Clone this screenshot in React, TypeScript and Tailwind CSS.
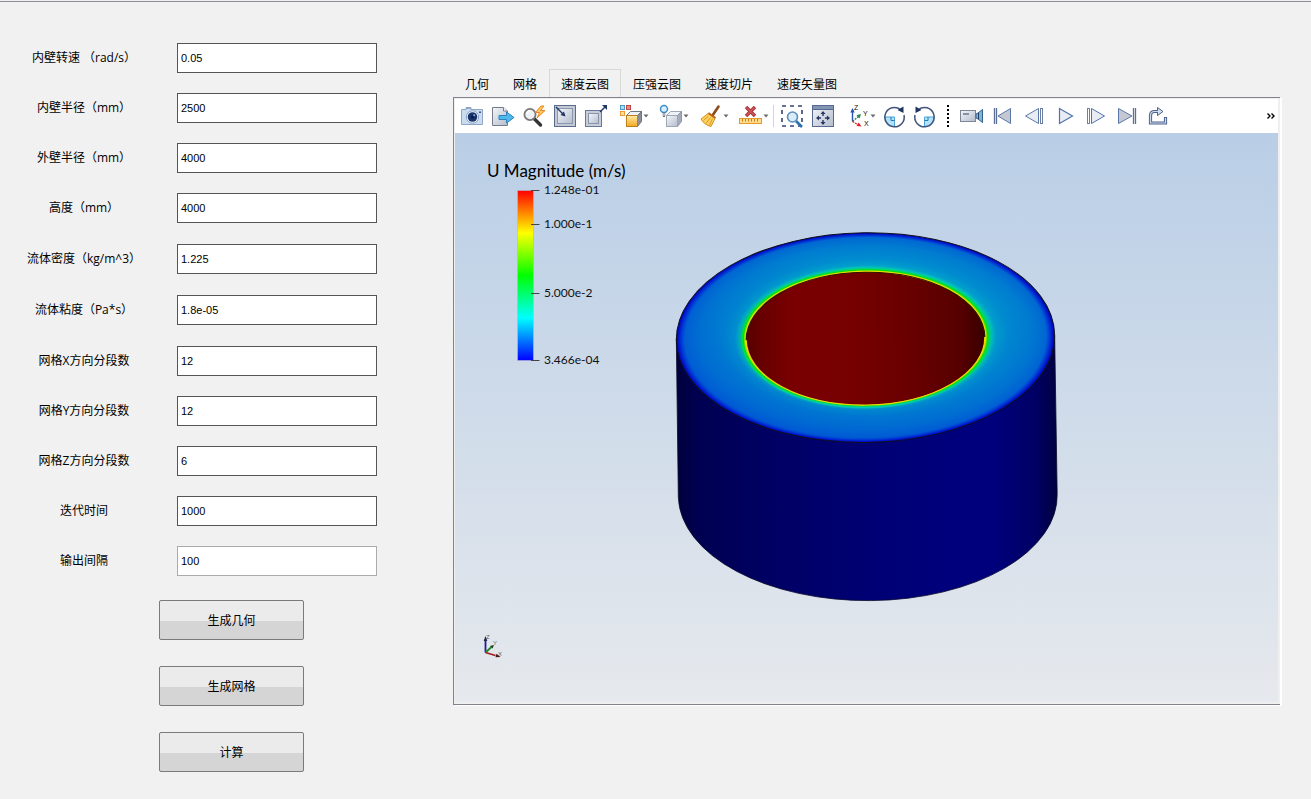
import type { ReactNode } from 'react'

const fieldGroups = [
  [
    { id: 'speed', label: '内壁转速 （rad/s）', value: '0.05' },
    { id: 'inner', label: '内壁半径（mm）', value: '2500' },
    { id: 'outer', label: '外壁半径（mm）', value: '4000' },
    { id: 'height', label: '高度（mm）', value: '4000' },
  ],
  [{ id: 'density', label: '流体密度（kg/m^3）', value: '1.225' }],
  [{ id: 'viscosity', label: '流体粘度（Pa*s）', value: '1.8e-05' }],
  [
    { id: 'meshx', label: '网格X方向分段数', value: '12' },
    { id: 'meshy', label: '网格Y方向分段数', value: '12' },
    { id: 'meshz', label: '网格Z方向分段数', value: '6' },
    { id: 'time', label: '迭代时间', value: '1000' },
    { id: 'interval', label: '输出间隔', value: '100', light: true },
  ],
]

const actions = ['生成几何', '生成网格', '计算']
const tabs = ['几何', '网格', '速度云图', '压强云图', '速度切片', '速度矢量图']

function Icon({ children }: { children: ReactNode }) {
  return (
    <svg viewBox="0 0 24 24" className="h-6 w-6 shrink-0" fill="none" aria-hidden="true">
      {children}
    </svg>
  )
}

function Tool({ label, children }: { label: string; children: ReactNode }) {
  return (
    <button type="button" aria-label={label} className="flex w-[31px] shrink-0 items-center justify-center">
      <Icon>{children}</Icon>
    </button>
  )
}

function DropTool({ label, children }: { label: string; children: ReactNode }) {
  return (
    <button type="button" aria-label={label} className="flex w-10 shrink-0 items-center pl-2">
      <Icon>{children}</Icon>
      <svg viewBox="0 0 6 4" className="h-1 w-1.5" aria-hidden="true">
        <path d="M0.5 0.5h5L3 3.5z" fill="#6b6b6b" />
      </svg>
    </button>
  )
}

function Toolbar() {
  return (
    <div className="flex h-[34px] shrink-0 items-stretch overflow-hidden bg-white px-px">
      <svg className="absolute h-0 w-0" aria-hidden="true">
        <defs>
          <linearGradient id="steel" x1="0" y1="0" x2="1" y2="1">
            <stop offset="0" stopColor="#f4f6fa" />
            <stop offset="1" stopColor="#b4bccc" />
          </linearGradient>
          <linearGradient id="gold" x1="0" y1="0" x2="0" y2="1">
            <stop offset="0" stopColor="#ffe9a8" />
            <stop offset="1" stopColor="#f5a81c" />
          </linearGradient>
        </defs>
      </svg>
      <Tool label="保存截图">
        <path d="M1.5 5.5H6V3.5h5v2h11.5v15h-21z" fill="#c9dcf0" stroke="#8fa6c4" />
        <rect x="6" y="3" width="5" height="2" fill="#8fa6c4" />
        <circle cx="12.5" cy="13" r="6.2" fill="#f3f8fd" stroke="#8aa2c4" />
        <circle cx="12.5" cy="13" r="4.8" fill="#17356e" />
        <circle cx="12.5" cy="13" r="1.8" fill="#0c1f47" />
        <circle cx="14.2" cy="11.2" r="1" fill="#86b4e8" />
        <rect x="19" y="7.5" width="2" height="1.5" fill="#3d5c90" />
      </Tool>
      <Tool label="导出场景">
        <path d="M1.5 3.5h11l4 3.5v14.5h-15z" fill="url(#steel)" stroke="#777c88" />
        <path d="M12.5 3.5V7h4" fill="#fff" stroke="#777c88" />
        <path d="M8 11.5h7.5V8l7.5 5.5-7.5 5.5v-3.5H8z" fill="#4db8ee" stroke="#2c83bb" />
      </Tool>
      <Tool label="自适应缩放">
        <path d="M12.5 15l6 6" stroke="#333" strokeWidth="3.4" strokeLinecap="round" />
        <circle cx="8" cy="10.5" r="5.6" fill="#eef0f3" stroke="#777" strokeWidth="1.8" />
        <path d="M5 10a3.3 3.3 0 013-3" stroke="#fff" strokeWidth="1.4" />
        <path d="M19 2l-5.5 6.5h4L15 14l8-7.5h-4.5L22 2z" fill="#ffc765" stroke="#ec861c" />
      </Tool>
      <Tool label="重置相机">
        <rect x="1.5" y="1.5" width="21" height="21" fill="#c3c9d4" stroke="#5a6b8c" />
        <rect x="4.5" y="4.5" width="15" height="15" fill="url(#steel)" stroke="#8c98ad" />
        <path d="M3 3l8.5 8.5" stroke="#233765" strokeWidth="1.4" />
        <path d="M12.5 12.5l-5-1.5 3.5-3.5z" fill="#233765" />
      </Tool>
      <Tool label="缩放到数据">
        <rect x="1.5" y="6.5" width="16" height="16" fill="#c6ccd8" stroke="#67789a" />
        <rect x="4.5" y="9.5" width="10" height="10" fill="url(#steel)" stroke="#8995aa" />
        <path d="M16 8l5.5-5.5" stroke="#233765" strokeWidth="1.4" />
        <path d="M23 1v5l-5-5z" fill="#233765" />
      </Tool>
      <DropTool label="选择块">
        <rect x="1.5" y="1.5" width="4" height="4" fill="#a8ddf5" stroke="#4d9cc6" />
        <rect x="7.5" y="1.5" width="4" height="4" fill="#e68b8b" stroke="#c04a4a" />
        <rect x="1.5" y="7.5" width="4" height="4" fill="#ffe0a0" stroke="#f09c34" />
        <path d="M7.5 11.5l4-4h11l-4 4z" fill="#eef1f5" stroke="#71757e" />
        <path d="M18.5 11.5l4-4v10l-4 5z" fill="#8a8e98" stroke="#71757e" />
        <rect x="7.5" y="11.5" width="11" height="11" fill="url(#gold)" stroke="#b98120" />
      </DropTool>
      <DropTool label="显示块">
        <path d="M7.5 11.5l4-4h11l-4 4z" fill="#eef1f5" stroke="#a0a7b4" />
        <path d="M18.5 11.5l4-4v10l-4 5z" fill="#a3abba" stroke="#8f97a6" />
        <rect x="7.5" y="11.5" width="11" height="11" fill="url(#steel)" stroke="#a0a7b4" />
        <circle cx="5" cy="5" r="3.5" fill="#d9effc" stroke="#3f8fca" strokeWidth="1.5" />
        <path d="M3.5 9h3M3.5 11h3M4 12.5h2" stroke="#5c6a80" />
      </DropTool>
      <DropTool label="清理">
        <path d="M19.5 2.5l-6 9" stroke="#8e4a1a" strokeWidth="2.6" strokeLinecap="round" />
        <path d="M9 9.5l7 5-4 8C8 21.5 4 19 2 15z" fill="#fbd262" stroke="#d99019" />
        <path d="M9.5 12L4.5 16.5M11.5 13.5L7 19.5M13.5 14.5l-3 7" stroke="#dc9a22" />
        <path d="M9.5 9l7 5" stroke="#b8651b" strokeWidth="1.8" />
      </DropTool>
      <DropTool label="删除标尺">
        <path d="M7 3l9 9M16 3l-9 9" stroke="#a93238" strokeWidth="3.4" />
        <path d="M7.5 3.5l8 8M15.5 3.5l-8 8" stroke="#cf5559" strokeWidth="1.6" />
        <rect x="0.5" y="14.5" width="22" height="5" fill="#ffdc8c" stroke="#e59a2a" />
        <path d="M3.5 15v2.5M6.5 15v2.5M9.5 15v2.5M12.5 15v2.5M15.5 15v2.5M18.5 15v2.5" stroke="#c47d1b" />
      </DropTool>
      <span className="mx-0.5 my-1.5 w-px shrink-0 bg-[#d4d4d4]" />
      <Tool label="框选缩放">
        <rect x="2" y="2" width="20" height="20" stroke="#35456e" strokeWidth="1.6" strokeDasharray="4 4" />
        <path d="M16 17l6 6" stroke="#2a73ae" strokeWidth="2.6" />
        <circle cx="12.5" cy="13" r="5" fill="#d8edf9" stroke="#5d8fb8" strokeWidth="1.6" />
      </Tool>
      <Tool label="全部显示">
        <rect x="1.5" y="1.5" width="21" height="21" fill="url(#steel)" stroke="#56698f" />
        <path d="M2 3.5h20" stroke="#8395b4" strokeWidth="3" />
        <path d="M1.5 5.5h21" stroke="#56698f" />
        <path d="M12 7l2.5 3h-5zM12 21l2.5-3h-5zM5 14l3-2.5v5zM19 14l-3-2.5v5z" fill="#243763" />
        <path d="M12 9v3M12 16v3M7 14h3M14 14h3" stroke="#243763" strokeWidth="1.4" />
      </Tool>
      <DropTool label="视图方向">
        <path d="M6.5 17.5V6" stroke="#2853b4" strokeWidth="1.4" />
        <path d="M6.5 4l2.2 4.5H4.3z" fill="#2853b4" />
        <path d="M6.5 17.5l6-5" stroke="#21884b" strokeWidth="1.4" strokeDasharray="2 1" />
        <path d="M15 10l-1.5 4.5-3-3.3z" fill="#21884b" />
        <path d="M6.5 17.5l6 3.5" stroke="#e02222" strokeWidth="1.4" strokeDasharray="2 1" />
        <path d="M15.5 22.5l-5-.5 2.2-3.5z" fill="#e02222" />
        <g fontSize="7" fill="#111" className="font-['Liberation_Sans',sans-serif]">
          <text x="8" y="6">Z</text>
          <text x="17" y="12">Y</text>
          <text x="18" y="22">X</text>
        </g>
      </DropTool>
      <Tool label="顺时针旋转">
        <path d="M3 13h9.5v9.500A9.500 9.500 0 013 13z" fill="#b5e2f8" stroke="#4ba5d6" />
        <path d="M9 13v3.500h3.500" stroke="#2b79b4" />
        <path d="M18.500 5.500A9.700 9.700 0 1022 11" stroke="#41547d" strokeWidth="1.500" />
        <path d="M21.500 2.500v6.500l-6-3z" fill="#1f3462" />
      </Tool>
      <Tool label="逆时针旋转">
        <path d="M21 13h-9.500v9.500A9.500 9.500 0 0021 13z" fill="#b5e2f8" stroke="#4ba5d6" />
        <path d="M15 13v3.500h-3.500" stroke="#2b79b4" />
        <path d="M5.500 5.500A9.700 9.700 0 112 11" stroke="#41547d" strokeWidth="1.500" />
        <path d="M2.500 2.500v6.500l6-3z" fill="#1f3462" />
      </Tool>
      <span className="mx-[7px] my-1.5 shrink-0 border-l-2 border-dotted border-black" />
      <Tool label="录制">
        <rect x="0.5" y="6.5" width="15" height="11" fill="url(#steel)" stroke="#7f8796" />
        <rect x="3" y="9" width="6" height="2" fill="#8791a3" />
        <path d="M16 10l2-1 4.5-3.5v13L18 15l-2-1z" fill="#7fb4d6" stroke="#355f8d" />
        <path d="M18.5 9v6" stroke="#243f66" />
      </Tool>
      <Tool label="第一帧">
        <path d="M3.5 4v16M5.500 4v16" stroke="#5c6f96" strokeWidth="1.3" />
        <path d="M19.5 4.5v15L7 12z" fill="#c3c8d2" stroke="#5c78a6" />
      </Tool>
      <Tool label="上一帧">
        <path d="M16.5 4.5v15L3.5 12z" fill="#e9edf3" stroke="#5c78a6" />
        <rect x="18.5" y="4.5" width="2" height="15" fill="#fff" stroke="#6c80a6" />
      </Tool>
      <Tool label="播放">
        <path d="M6.5 4.5v15L19.5 12z" fill="#e9edf3" stroke="#4f74ab" strokeWidth="1.2" />
      </Tool>
      <Tool label="下一帧">
        <rect x="3.5" y="4.5" width="2" height="15" fill="#fff" stroke="#6c80a6" />
        <path d="M7.5 4.5v15L20.5 12z" fill="#e9edf3" stroke="#4f74ab" />
      </Tool>
      <Tool label="最后一帧">
        <path d="M3.5 4.5v15L17 12z" fill="#c3c8d2" stroke="#5c78a6" />
        <path d="M18.500 4v16M20.500 4v16" stroke="#5c6f96" strokeWidth="1.3" />
      </Tool>
      <Tool label="循环">
        <path d="M12 7.500H8.500q-4 0-4 4v7.500h15v-6" stroke="#4d648f" strokeWidth="3.200" />
        <path d="M11.500 3.500l5.500 4-5.500 4z" fill="#d5dfec" stroke="#4d648f" />
        <path d="M12.500 7.500h-4q-4 0-4 4v7.500h15v-5" stroke="#cfdaea" strokeWidth="1.200" />
      </Tool>
      <button type="button" aria-label="更多" className="ml-auto flex w-3 shrink-0 items-center justify-center">
        <svg viewBox="0 0 8 6" className="h-1.5 w-2" fill="none" stroke="#000" strokeWidth="1.4" aria-hidden="true">
          <path d="M0.5 0.5L3 3L0.5 5.5M4.5 0.5L7 3L4.5 5.5" />
        </svg>
      </button>
    </div>
  )
}

function Legend() {
  return (
    <div className="absolute top-7 left-8 text-black font-['Lato',sans-serif]">
      <div className="text-[17px] leading-5">U Magnitude (m/s)</div>
      <svg viewBox="0 0 130 190" className="-mt-0.5 h-[190px] w-[130px]" aria-hidden="true">
        <defs>
          <linearGradient id="rainbow" x1="0" y1="0" x2="0" y2="1">
            <stop offset="0" stopColor="#f00" />
            <stop offset="0.25" stopColor="#ff0" />
            <stop offset="0.5" stopColor="#0f0" />
            <stop offset="0.75" stopColor="#0ff" />
            <stop offset="1" stopColor="#00f" />
          </linearGradient>
        </defs>
        <rect x="30.5" y="11.5" width="16" height="170" fill="url(#rainbow)" stroke="#b9b4d8" strokeWidth="0.6" />
        <path d="M44 11.5h8.5M44 45.5h8.5M44 114.5h8.5M44 181.5h8.5" stroke="#444" />
        <g fontSize="12" fill="#111">
          <text x="57" y="15">1.248e-01</text>
          <text x="57" y="49">1.000e-1</text>
          <text x="57" y="118">5.000e-2</text>
          <text x="57" y="185">3.466e-04</text>
        </g>
      </svg>
    </div>
  )
}

function Model() {
  return (
    <svg viewBox="0 0 823 570" className="absolute inset-0 h-full w-full" aria-label="速度云图">
      <defs>
        <linearGradient id="wall">
          <stop offset="0" stopColor="#00003c" />
          <stop offset="0.06" stopColor="#000052" />
          <stop offset="0.25" stopColor="#000064" />
          <stop offset="0.55" stopColor="#000076" />
          <stop offset="0.82" stopColor="#00007e" />
          <stop offset="0.94" stopColor="#000066" />
          <stop offset="1" stopColor="#000040" />
        </linearGradient>
        <radialGradient id="flow">
          <stop offset="0.634" stopColor="#f0e000" />
          <stop offset="0.64" stopColor="#80e000" />
          <stop offset="0.645" stopColor="#00e018" />
          <stop offset="0.653" stopColor="#00dc50" />
          <stop offset="0.666" stopColor="#00c8b4" />
          <stop offset="0.69" stopColor="#00a0cc" />
          <stop offset="0.75" stopColor="#008ccf" />
          <stop offset="0.88" stopColor="#007bd0" />
          <stop offset="0.955" stopColor="#0068d2" />
          <stop offset="0.98" stopColor="#0028d4" />
          <stop offset="1" stopColor="#0000b8" />
        </radialGradient>
        <linearGradient id="shade" x1="0.2" y1="1" x2="0.6" y2="0.2">
          <stop offset="0" stopColor="#0038d8" stopOpacity="0.35" />
          <stop offset="1" stopColor="#0038d8" stopOpacity="0" />
        </linearGradient>
        <linearGradient id="bore">
          <stop offset="0" stopColor="#580000" />
          <stop offset="0.08" stopColor="#6a0000" />
          <stop offset="0.2" stopColor="#7a0000" />
          <stop offset="0.45" stopColor="#760000" />
          <stop offset="0.7" stopColor="#680000" />
          <stop offset="0.9" stopColor="#560000" />
          <stop offset="1" stopColor="#380000" />
        </linearGradient>
      </defs>
      <path
        d="M221 206L223 365A189 105 0 00602.5 361L600 203Z"
        fill="url(#wall)"
        stroke="#0a0a28"
        strokeWidth="0.8"
      />
      <g transform="rotate(-0.8 410.5 205)">
        <ellipse cx="410.5" cy="205" rx="189.5" ry="105" fill="url(#flow)" />
        <path
          d="M225 205a185.5 101.5 0 10371 0a185.500 101.500 0 10-371 0zM286 205.500a124.500 70.500 0 11249 0a124.500 70.500 0 11-249 0z"
          fillRule="evenodd"
          fill="url(#shade)"
        />
        <ellipse cx="410.5" cy="205" rx="189.5" ry="105" stroke="#10101c" fill="none" />
        <ellipse cx="410.5" cy="206" rx="119.5" ry="66.5" fill="url(#bore)" />
        <path d="M291 206a119.5 66.5 0 01239 0" stroke="#2c1400" strokeWidth="1.2" fill="none" />
        <path d="M291 206a119.5 66.5 0 00239 0" stroke="#f0d800" strokeWidth="1.2" fill="none" />
      </g>
    </svg>
  )
}

function Axes() {
  return (
    <svg viewBox="0 0 24 24" className="absolute bottom-11 left-[26px] h-6 w-6" fill="none" aria-hidden="true">
      <path d="M4.5 18.5V5" stroke="#1c1c96" strokeWidth="1.8" />
      <path d="M4.5 2l1.8 5H2.700z" fill="#26264c" />
      <path d="M4.5 18.5l6-5.5" stroke="#1b8a22" strokeWidth="1.8" />
      <path d="M13 11l-1.5 3.5-2.5-2.5z" fill="#163c18" />
      <path d="M4.5 18.5l10 3" stroke="#a31d1d" strokeWidth="1.8" />
      <path d="M19.5 23l-5 .2 1-3.400z" fill="#4c1616" />
      <g fontSize="6" fill="#666" className="font-['Liberation_Sans',sans-serif]">
        <text x="5" y="5">Z</text>
        <text x="12" y="11">Y</text>
        <text x="17" y="22">X</text>
      </g>
    </svg>
  )
}

export default function App() {
  return (
    <div
      lang="zh-CN"
      className="flex min-h-screen flex-col bg-[#f1f1f1] pt-px text-xs text-black font-['Noto_Sans_CJK_SC',sans-serif]"
    >
      <div className="h-px bg-[#8e8e96]" />
      <div className="flex flex-1">
        {/* Parameters */}
        <form className="w-[453px] shrink-0 pt-[41px]">
          <div className="flex flex-col gap-[21px]">
            {fieldGroups.map((group) => (
              <div key={group[0].id} className="flex flex-col gap-5">
                {group.map((field) => (
                  <div key={field.id} className="flex items-center gap-[9px]">
                    <label
                      htmlFor={field.id}
                      className="w-[168px] text-center whitespace-pre font-['Open_Sans','Noto_Sans_CJK_SC',sans-serif]"
                    >
                      {field.label}
                    </label>
                    <input
                      id={field.id}
                      type="text"
                      defaultValue={field.value}
                      className={`h-[30px] w-[200px] border bg-white px-[3px] text-[11px] outline-none font-['Liberation_Sans',sans-serif] ${
                        'light' in field ? 'border-[#ababab]' : 'border-[#555]'
                      }`}
                    />
                  </div>
                ))}
              </div>
            ))}
          </div>
          <div className="mt-6 flex flex-col gap-[26px] pl-[159px]">
            {actions.map((action) => (
              <button
                key={action}
                type="button"
                className="h-10 w-[145px] rounded-[2px] border border-[#7a7a7a] bg-linear-to-b from-[#ebebeb] from-52% to-[#d5d5d5] to-52%"
              >
                {action}
              </button>
            ))}
          </div>
        </form>

        {/* Result viewer */}
        <div className="mt-[67px] mr-[31px] mb-[94px] flex min-w-0 flex-1 flex-col">
          <div role="tablist" className="flex h-7 shrink-0">
            {tabs.map((tab) => (
              <button
                key={tab}
                type="button"
                role="tab"
                aria-selected={tab === '速度云图'}
                className={`border border-b-0 px-[11px] pt-px whitespace-nowrap ${
                  tab === '速度云图' ? 'border-[#d9d9d9]' : 'border-transparent'
                }`}
              >
                {tab}
              </button>
            ))}
          </div>
          <div className="flex flex-1 flex-col border border-r-0 border-[#82828c] bg-[#efefef] pt-px pr-0.5 pb-0.5 pl-px shadow-[2px_1px_0_#fff]">
            <Toolbar />
            <div className="relative flex-1 overflow-hidden bg-linear-to-b from-[#b9cee6] to-[#e6e9ed]">
              <Model />
              <Legend />
              <Axes />
            </div>
          </div>
        </div>
      </div>
    </div>
  )
}
